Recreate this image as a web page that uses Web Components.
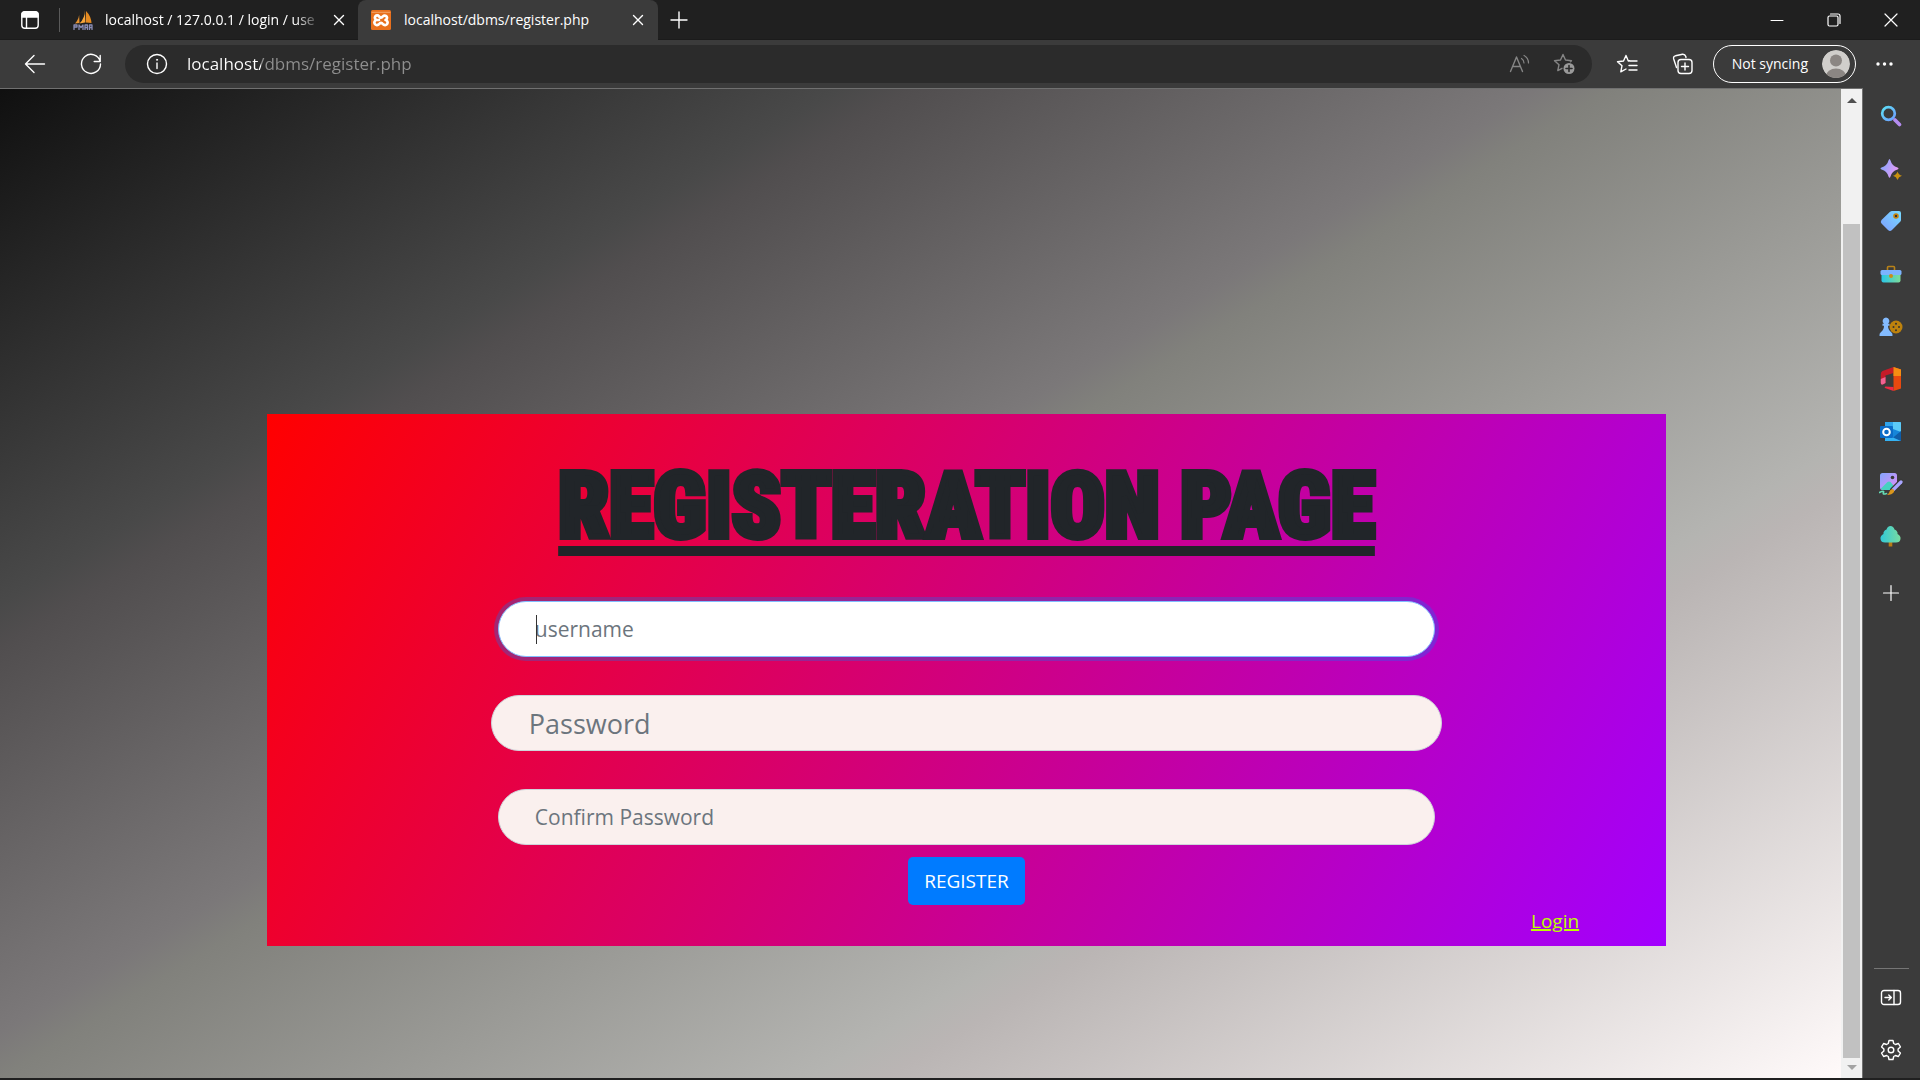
<!DOCTYPE html>
<html lang="en">
<head>
<meta charset="utf-8">
<title>localhost/dbms/register.php</title>
<style>
html,body{margin:0;height:100%}
body{font-family:"Open Sans","Noto Sans",sans-serif;background:#202020;overflow:hidden}
</style>
</head>
<body>
<browser-window>
  <tab-strip slot="tabs">
    <browser-tab label="localhost / 127.0.0.1 / login / use" icon="pma"></browser-tab>
    <browser-tab label="localhost/dbms/register.php" icon="xampp" active></browser-tab>
  </tab-strip>
  <tool-bar slot="tools"></tool-bar>
  <register-page slot="page"></register-page>
  <scroll-bar slot="page"></scroll-bar>
  <side-bar slot="side"></side-bar>
</browser-window>
<script>
const svg=(w,h,body,extra='')=>`<svg width="${w}" height="${h}" viewBox="0 0 ${w} ${h}" fill="none" stroke="#fff" stroke-width="1.4" stroke-linecap="round" stroke-linejoin="round" aria-hidden="true" ${extra}>${body}</svg>`;
const icons={
 workspace:svg(20,20,'<rect x="1.8" y="1.8" width="16.4" height="16.4" rx="3"/><path d="M2 5a3 3 0 0 1 3-3h10a3 3 0 0 1 3 3v2H2z" fill="#fff"/><path d="M6.500 7v11"/>'),
 close:svg(12,12,'<path d="M1.500 1.500l9 9M10.500 1.500l-9 9"/>'),
 plus:svg(18,18,'<path d="M9 1v16M1 9h16"/>'),
 min:svg(14,14,'<path d="M1 7.500h12" stroke-width="1"/>'),
 restore:svg(14,14,'<rect x="1" y="3" width="10" height="10" rx="1.500" stroke-width="1.200"/><path d="M3.500 1h7.500a2 2 0 0 1 2 2v7.500" stroke-width="1.200"/>'),
 winclose:svg(14,14,'<path d="M1 1l12 12M13 1L1 13" stroke-width="1.200"/>'),
 back:svg(22,20,'<path d="M20.500 10H1.500M10 1.500L1.500 10L10 18.500"/>'),
 reload:svg(22,22,'<path d="M20.200 8.500A9.500 9.500 0 1 0 20.500 11M20.200 2.500v6h-6"/>'),
 info:svg(22,22,'<circle cx="11" cy="11" r="9.500"/><path d="M11 10v5.500"/><circle cx="11" cy="6.800" r=".6" fill="#fff" stroke-width=".8"/>'),
 read:svg(22,20,'<g stroke="#858585"><path d="M1.500 17.500L7.500 3L13.500 17.500M3.500 12.500h8"/><path d="M12.500 4.500q2.500 1.500 2.500 4.500M15 1.500q4.500 2.500 4.500 7.500" stroke-width="1.200"/></g>'),
 staradd:svg(22,22,`<path d="M9 15.300L4.800 17.600L6 11.700L1.500 7.700L7.500 7L10 1.500L12.500 7L18.500 7.700L17.500 8.700" stroke="#858585"/><circle cx="16" cy="15.500" r="5.500" fill="#9a9a9a" stroke="none"/><path d="M16 12.500v6M13 15.500h6" stroke="#2b2b2b" stroke-width="1.600"/>`),
 favs:svg(22,20,'<path d="M13.500 6.800L12.300 7L10 1.500L7.500 7L1.500 7.700L6 11.700L4.800 17.800L10 15"/><path d="M14 7h7M13 11.500h8M13 16h8"/>'),
 collect:svg(22,22,'<path d="M4.500 14.500L1.700 6Q1 3.500 3.500 2.800L10.500 1.200Q13 1 13.800 3.500L14 4.500"/><rect x="6" y="6.500" width="14" height="14" rx="3"/><path d="M13 10v7M9.500 13.500h7"/>'),
 dots:svg(20,6,'<g fill="#fff" stroke="none"><circle cx="3" cy="3" r="1.700"/><circle cx="9.500" cy="3" r="1.700"/><circle cx="16" cy="3" r="1.700"/></g>'),
 avatar:svg(28,28,'<defs><clipPath id="c"><circle cx="14" cy="14" r="14"/></clipPath></defs><g stroke="none" clip-path="url(#c)"><circle cx="14" cy="14" r="14" fill="#d0cecb"/><circle cx="14" cy="10.500" r="6" fill="#8b8683"/><ellipse cx="14" cy="26" rx="10" ry="7.500" fill="#8b8683"/></g>'),
 pma:svg(20,20,'<g stroke="none"><path d="M6 1.500Q7 8 2 13.500L6.500 13Z" fill="#e89330"/><path d="M12 0Q12 8 6.500 13.500L12 12.500Z" fill="#f7a53a"/><path d="M13 1Q18 6 18.500 13L12.500 12.500Z" fill="#e58a20"/></g><path d="M1 19.500V15h3v2H1M6 19.500V15l2 2.500L10 15v4.500M12 19.500V15h2.500v4.500M12 17.500h2.500M16.500 19.500V15H19v4.500M16.500 17.500H19" stroke="#8a8db5" stroke-width="1.300"/>'),
 xampp:svg(20,20,'<rect width="20" height="20" rx="1.500" fill="#e8701d" stroke="none"/><path d="M1 2.300h18" stroke="#f6b07c" stroke-width=".8"/><path d="M8 10H6A2.300 2.300 0 1 1 8 6.300Q10 9 12 6.300A2.300 2.300 0 1 1 14.500 10A2.600 2.600 0 1 1 12 14.200Q10 11.500 8 14.200A2.600 2.600 0 1 1 5.500 10" stroke-width="2.700"/>'),
 search:svg(22,22,'<defs><linearGradient id="g" x1="0" y1="0" x2="1" y2="1"><stop stop-color="#5ce0f5"/><stop offset="1" stop-color="#6f9cff"/></linearGradient></defs><circle cx="8.500" cy="8.500" r="6.300" stroke="url(#g)" stroke-width="2.700"/><path d="M15 15l4.500 4.500" stroke="#b58cf0" stroke-width="3.600"/>'),
 spark:svg(22,22,'<defs><linearGradient id="g" x1="0" y1="0" x2="1" y2=".4"><stop stop-color="#7aa7ff"/><stop offset="1" stop-color="#e29af5"/></linearGradient></defs><g stroke="none"><path d="M9.500 1Q10 1 10.500 2.500Q12 8 17.500 9.500Q19.500 10.500 17.500 11.500Q12 13 10.500 18.500Q9.500 21 8.500 18.500Q7 13 1.500 11.500Q-.5 10.500 1.500 9.500Q7 8 8.500 2.500Q9 1 9.500 1Z" fill="url(#g)"/><path d="M17.500 13.500Q18.500 17 22 17.800Q18.500 18.800 17.500 22Q16.500 18.800 13 17.800Q16.500 17 17.500 13.500Z" fill="#c9900f"/></g>'),
 tag:svg(22,22,'<defs><linearGradient id="g" x1="1" y1="0" x2="0" y2="1"><stop stop-color="#77dcff"/><stop offset="1" stop-color="#7e9dff"/></linearGradient></defs><path d="M12 1h7q2 0 2 2v7q0 1-.8 1.800L12 20q-2 2-4 0L1.500 13.500q-1.500-1.500 0-3.500l8.300-8Q11 1 12 1z" fill="url(#g)" stroke="none"/><circle cx="16" cy="6" r="2" stroke="#c98509" stroke-width="1.600" fill="#333"/>'),
 tools:svg(22,22,'<defs><linearGradient id="g"><stop stop-color="#29c6e8"/><stop offset="1" stop-color="#7ddc9a"/></linearGradient></defs><path d="M7.500 7V4.500q0-1 1-1h5q1 0 1 1V7" stroke="#b98218" stroke-width="1.600"/><path d="M1.500 10h19v7.500q0 2-2 2h-15q-2 0-2-2z" fill="url(#g)" stroke="none"/><rect x=".5" y="7" width="21" height="5" rx="1.500" fill="#7cb3ff" stroke="none"/><circle cx="11" cy="13" r="2" fill="#cc8d18" stroke="none"/>'),
 games:svg(24,22,'<circle cx="17" cy="11" r="6.500" fill="#bd820d" stroke="none"/><g fill="#333" stroke="none"><circle cx="17" cy="7.800" r="1"/><circle cx="20" cy="11" r="1"/><circle cx="17" cy="14.200" r="1"/><circle cx="14.500" cy="11" r="1"/></g><path d="M7 1.500a3.500 3.500 0 0 1 2 6.300h1.500v2H9q0 4 3 6.200q2 1.500 1.500 4H.5q-.5-2.500 1.500-4q3-2.200 3-6.200H3.500v-2H5A3.500 3.500 0 0 1 7 1.500z" fill="#83bbff" stroke="none"/>'),
 office:svg(22,24,'<g stroke="none"><path d="M13.500 0L21 2.500v19L13.500 24z" fill="#e8490f"/><path d="M13.500 0L2.500 4Q.8 5 .8 7v9q0 2 2 1.500L5.500 16V8.500L13.500 6z" fill="#c51b28"/><path d="M5.500 16L2.800 17.500Q.8 18 .8 16v-4l4.700-2z" fill="#f06292"/><path d="M13.500 24L5 21q-1-1 .5-1.500l8 .5z" fill="#ef2a44"/><path d="M13.500 0L21 2.500V9h-7.500z" fill="#f58d12"/></g>'),
 outlook:svg(22,22,'<g stroke="none"><rect x="5" y="1" width="16" height="19" rx="1" fill="#1685d9"/><path d="M5 1h8v7H5z" fill="#2fa4ec"/><path d="M13 1h7q1 0 1 1v9l-8-3z" fill="#5ccaf7"/><path d="M21 10v10H9z" fill="#0f5da8"/><path d="M5 13l16 7H5z" fill="#35b2f3"/><rect x="0" y="5" width="13" height="12" rx="1" fill="#0c6cc7"/></g><circle cx="6.500" cy="11" r="3.300" stroke-width="2"/>'),
 image:svg(24,24,'<defs><linearGradient id="g" x1="0" y1="0" x2="1" y2="1"><stop stop-color="#83a6ff"/><stop offset="1" stop-color="#e28cf5"/></linearGradient></defs><rect x="1" y="1" width="17" height="17" rx="2.500" fill="url(#g)" stroke="none"/><path d="M1.500 17l7-7q1.500-1 3 0l5 6-2 2H4z" fill="#45d1c0" stroke="none"/><circle cx="13.500" cy="5.500" r="1.800" fill="#383838" stroke="none"/><path d="M22 10L14 18" stroke="#383838" stroke-width="6"/><path d="M22 10L14.500 17.500" stroke="#a9a5ff" stroke-width="3.200"/><path d="M14 17q2 1 1 3-2 3-7 3l2-2q1-4 4-4z" fill="#d9961c" stroke="none"/><path d="M.5 20.500q5-2.500 4 0t3 1" stroke="#66ddb5" stroke-width="1.600"/>'),
 tree:svg(22,22,'<defs><linearGradient id="g"><stop stop-color="#31c9d8"/><stop offset="1" stop-color="#7adca0"/></linearGradient></defs><path d="M10.500 15v5.500" stroke="#b77b16" stroke-width="3.600" stroke-linecap="butt"/><path d="M10.500 0Q13.500 0 14.500 3.500Q18 5 17.500 8Q21 10 20.500 13Q20 16.500 16 16.500H5Q1 16.500.5 13Q0 10 3.500 8Q3 5 6.500 3.500Q7.500 0 10.500 0z" fill="url(#g)" stroke="none"/>'),
 add:svg(18,18,'<path d="M9 1.500v15M1.500 9h15" stroke-width="1.200"/>'),
 panel:svg(22,18,'<rect x="1.500" y="1.500" width="19" height="14" rx="2.500"/><path d="M14 1.500v14M5 8.500h6M8.800 6l2.500 2.500L8.800 11"/>'),
 gear:svg(22,22,'<circle cx="11" cy="11" r="2.800"/><path d="M9 1.500h4l.7 3 1.700 1 3-1 2 3.400-2.300 2.100v2l2.300 2.100-2 3.400-3-1-1.700 1-.7 3H9l-.7-3-1.700-1-3 1-2-3.400L3.900 12v-2L1.600 7.900l2-3.400 3 1 1.700-1z"/>')
};
function define(name,render){
  customElements.define(name,class extends HTMLElement{
    connectedCallback(){
      if(this.shadowRoot)return;
      const root=this.attachShadow({mode:'open'});
      const t=document.createElement('template');
      t.innerHTML='<style>*{box-sizing:border-box}svg{display:block}button{border:0;background:none;padding:0;margin:0;font:inherit;color:inherit}</style>'+render(this);
      root.append(t.content.cloneNode(true));
    }
  });
}
define('icon-button',e=>`<style>:host{display:flex;flex:none}button{display:grid;place-items:center;width:100%;height:100%}</style><button aria-label="${e.getAttribute('label')}">${icons[e.getAttribute('icon')]}</button>`);
define('browser-window',()=>`<style>
:host{display:flex;flex-direction:column;height:100vh;background:#202020;padding-bottom:2px;box-sizing:border-box}
.body{flex:1;display:flex;min-height:0;background:#3b3b3b}
.page{flex:1;display:flex;min-width:0;border-top:1px solid #707070;border-right:1px solid #707070}
</style><slot name="tabs"></slot><slot name="tools"></slot><div class="body"><div class="page"><slot name="page"></slot></div><slot name="side"></slot></div>`);
define('tab-strip',()=>`<style>
:host{display:flex;height:40px;background:#202020;align-items:stretch;box-shadow:inset 0 -1px #1b1b1b;padding-right:1px;box-sizing:border-box}
.ws{width:59px}.sep{width:1px;margin:8px 0;background:#5a5a5a}
.new{width:42px}.space{flex:1}.win{width:57px}
</style><icon-button class="ws" icon="workspace" label="Tab actions"></icon-button><div class="sep"></div><slot></slot>
<icon-button class="new" icon="plus" label="New tab"></icon-button><div class="space"></div>
<icon-button class="win" icon="min" label="Minimise"></icon-button><icon-button class="win" icon="restore" label="Restore"></icon-button><icon-button class="win" icon="winclose" label="Close"></icon-button>`);
define('browser-tab',e=>`<style>
:host{display:flex;align-items:center;width:298px;box-sizing:border-box;padding:0 9px 0 13px;color:#fff;font-size:14px;line-height:20px}
:host([active]){background:#3b3b3b;border-radius:8px 8px 0 0;width:300px;padding-right:10px}
.t{flex:1;min-width:0;margin:0 8px 0 12px;white-space:nowrap;overflow:hidden}
:host([active]) .t{margin-left:13px}
:host(:not([active])) .t{-webkit-mask-image:linear-gradient(90deg,#000 88%,transparent)}
icon-button{width:20px;height:20px}
</style>${icons[e.getAttribute('icon')]}<span class="t">${e.getAttribute('label')}</span><icon-button icon="close" label="Close tab"></icon-button>`);
define('tool-bar',()=>`<style>
:host{display:flex;align-items:center;height:48px;background:#3b3b3b;color:#fff;padding:0 6px 0 7px}
.nav{width:56px;height:38px}
.addr{flex:1;display:flex;align-items:center;height:38px;border-radius:19px;background:#2b2b2b;padding:0 6px 0 16px;margin-left:6px}
.addr icon-button{width:44px;height:38px}.addr .info{width:32px}
input{flex:1;min-width:0;border:0;outline:0;padding:0;margin-left:14px;font:17px/24px "Open Sans","Noto Sans",sans-serif;color:#999;background:linear-gradient(90deg,#fff 74px,#8f8f8f 74px);-webkit-background-clip:text;background-clip:text;-webkit-text-fill-color:transparent}
.tool{width:56px;height:38px}.addr+.tool{margin-left:7px}
.sync{display:flex;align-items:center;gap:14px;height:38px;border:1px solid #fff;border-radius:19px;padding:0 5px 0 18px;margin-left:2px;font-size:14px;line-height:20px;white-space:nowrap}
.more{width:58px;height:38px}
</style><icon-button class="nav" icon="back" label="Back"></icon-button><icon-button class="nav" icon="reload" label="Refresh"></icon-button>
<div class="addr"><icon-button class="info" icon="info" label="Site information"></icon-button><input aria-label="Address" value="localhost/dbms/register.php" spellcheck="false"><icon-button icon="read" label="Read aloud"></icon-button><icon-button icon="staradd" label="Add to favourites"></icon-button></div>
<icon-button class="tool" icon="favs" label="Favourites"></icon-button><icon-button class="tool" icon="collect" label="Collections"></icon-button>
<button class="sync"><span>Not syncing</span>${icons.avatar}</button><icon-button class="more" icon="dots" label="Settings and more"></icon-button>`);
define('side-bar',()=>`<style>
:host{display:flex;flex-direction:column;width:57px;background:#3b3b3b;align-items:center;padding:16px 1px 16px 0;box-sizing:border-box}
.apps{display:flex;flex-direction:column;justify-content:space-between;height:445px}
icon-button{width:40px;height:24px}.add{margin-top:32px}
.line{margin-top:auto;width:35px;height:1px;background:#757575}.low{margin-top:17px}.low+.low{margin-top:28px}
</style><div class="apps">${[['search','Search'],['spark','Discover'],['tag','Shopping'],['tools','Tools'],['games','Games'],['office','Office'],['outlook','Outlook'],['image','Image Creator'],['tree','E-tree']].map(a=>`<icon-button icon="${a[0]}" label="${a[1]}"></icon-button>`).join('')}</div>
<icon-button class="add" icon="add" label="Customise"></icon-button><div class="line"></div><icon-button class="low" icon="panel" label="Hide sidebar"></icon-button><icon-button class="low" icon="gear" label="Settings"></icon-button>`);
define('scroll-bar',()=>`<style>
:host{display:grid;grid-template-rows:22px 113px 1fr 20px;width:21px;background:#f1f1f1;flex:none}
svg{margin:auto}.thumb{background:#c1c1c1;margin:0 2px;grid-row:3}.down{grid-row:4}
</style><svg width="10" height="6"><path d="M0 6L5 1L10 6z" fill="#505050"/></svg><div class="thumb"></div><svg class="down" width="10" height="6"><path d="M0 0L5 5L10 0z" fill="#a3a3a3"/></svg>`);
define('pill-field',e=>`<style>
:host{display:block;position:relative;width:67%}
:host([large]){width:68%}
input{display:block;width:100%;height:56px;border:1px solid #ced4da;border-radius:28px;background:#faf0ee;padding:0 36px;font:21px/32px "Open Sans","Noto Sans",sans-serif;color:#495057;outline:0}
:host([large]) input{font-size:27px;padding:0 37px}
:host([current]) input{background:#fff;border-color:#80bdff;box-shadow:0 0 0 4px rgba(0,123,255,.3)}
:host([current])::after{content:"";position:absolute;left:38px;top:14px;width:1px;height:29px;background:#333}
input::placeholder{color:#6c757d;opacity:1}
</style><input type="${e.getAttribute('type')}" placeholder="${e.getAttribute('label')}" aria-label="${e.getAttribute('label')}">`);
define('register-page',()=>`<style>
:host{display:block;flex:1;min-width:0;overflow:hidden;padding-top:325px;background:linear-gradient(to bottom right,#000,#494949 29%,#514e4f 31%,#7b7879 48%,#81817c 50%,#b4b4b1 72%,#bab5b4 74%,#fffafa) 0 100%/100% 1130px no-repeat}
form{display:flex;flex-direction:column;align-items:center;width:76%;margin-left:14.5%;background:linear-gradient(120deg,#f00,#a200ff);height:532px}
h1{margin:34px 0 0;height:116px;font:900 90px/118px "Roboto Condensed","Liberation Sans Narrow",Impact,"Liberation Sans",sans-serif;color:#212529;-webkit-text-stroke:6px #212529;text-decoration:underline;text-decoration-thickness:10px;text-underline-offset:9px;text-decoration-skip-ink:none;white-space:nowrap}
pill-field{margin-bottom:38px}h1+pill-field{margin-top:37px}pill-field[last]{margin-bottom:12px}
.go{height:48px;border-radius:5px;background:#007bff;color:#fff;padding:0 16px;font-size:19px;line-height:28px}
a{align-self:flex-end;margin-right:87px;margin-top:2px;font-size:19px;line-height:28px;color:#bf0;text-decoration-thickness:2px}
</style><form><h1>REGISTERATION PAGE</h1><pill-field current type="text" label="username"></pill-field><pill-field large type="password" label="Password"></pill-field><pill-field last type="password" label="Confirm Password"></pill-field><button type="button" class="go">REGISTER</button><a href="#login">Login</a></form>`);
</script>
</body>
</html>
